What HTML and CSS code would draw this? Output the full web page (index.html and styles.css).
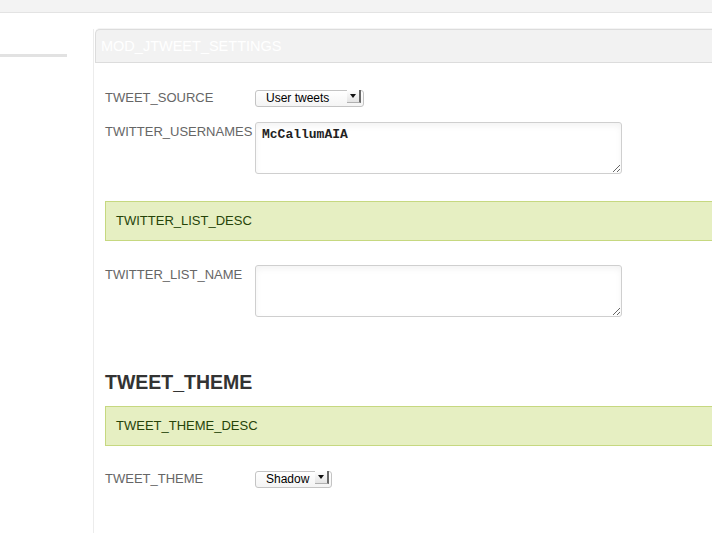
FILE: index.html
```html
<!DOCTYPE html>
<html lang="en">
<head>
    <meta charset="UTF-8">
    <meta name="viewport" content="width=device-width, initial-scale=1.0">
    <title>Module Settings</title>
    <link rel="stylesheet" href="styles.css">
</head>
<body>

    <!-- Top Bar -->
    <div class="topbar"></div>

    <div class="layout">
        <!-- Sidebar -->
        <div class="sidebar">
            <div class="sidebar-line"></div>
        </div>

        <!-- Settings Panel -->
        <div class="panel">
            <div class="panel-title">MOD_JTWEET_SETTINGS</div>

            <div class="panel-body">
                <div class="row row-source">
                    <label class="row-label" for="tweetSource">TWEET_SOURCE</label>
                    <span class="select-wrap">
                        <select id="tweetSource" class="select">
                            <option>User tweets</option>
                        </select>
                        <span class="select-arrow"></span>
                    </span>
                </div>

                <div class="row row-usernames">
                    <label class="row-label row-label-top" for="usernames">TWITTER_USERNAMES</label>
                    <textarea id="usernames" class="textarea">McCallumAIA</textarea>
                </div>

                <div class="notice notice-list">TWITTER_LIST_DESC</div>

                <div class="row row-listname">
                    <label class="row-label row-label-top" for="listName">TWITTER_LIST_NAME</label>
                    <textarea id="listName" class="textarea"></textarea>
                </div>

                <h3 class="section-title">TWEET_THEME</h3>

                <div class="notice notice-theme">TWEET_THEME_DESC</div>

                <div class="row row-theme">
                    <label class="row-label" for="tweetTheme">TWEET_THEME</label>
                    <span class="select-wrap select-small">
                        <select id="tweetTheme" class="select">
                            <option>Shadow</option>
                        </select>
                        <span class="select-arrow"></span>
                    </span>
                </div>
            </div>
        </div>
    </div>

</body>
</html>
```

FILE: styles.css
```css
/* Page layout */
body, html {
    margin: 0;
    height: 100%;
    overflow: hidden;
    background-color: #fff;
    font-family: "Liberation Sans", Arial, Helvetica, sans-serif;
}

/* Top bar */
.topbar {
    height: 12px;
    background-color: #f3f3f3;
    border-bottom: 1px solid #e3e3e3;
}

.layout {
    display: flex;
    padding-top: 16px;
    height: 100%;
    box-sizing: border-box;
}

/* Sidebar */
.sidebar {
    width: 67px;
    flex: none;
    margin-right: 26px;
}

.sidebar-line {
    margin-top: 25px;
    height: 3px;
    background-color: #e2e2e2;
}

/* Settings panel */
.panel {
    flex: none;
    width: 720px;
    border-left: 1px solid #ececec;
}

.panel-title {
    height: 32px;
    line-height: 32px;
    padding-left: 5px;
    margin-left: 1px;
    background-color: #f2f2f2;
    border: 1px solid #dcdcdc;
    border-right: none;
    border-radius: 5px 0 0 0;
    box-shadow: 0 -1px 0 #f4f4f4;
    color: #fff;
    font-size: 14.5px;
}

.panel-body {
    padding: 24px 0 0 11px;
}

/* Form rows */
.row {
    display: flex;
    align-items: center;
}

.row-label {
    width: 150px;
    flex: none;
    padding-top: 3px;
    font-size: 13px;
    color: #666;
}

.row-label-top {
    align-self: flex-start;
    padding-top: 2px;
}

.row-usernames {
    margin-top: 17px;
}

.row-listname {
    margin-top: 24px;
}

.row-theme {
    margin-top: 22px;
}

/* Select boxes */
.select-wrap {
    position: relative;
    display: inline-block;
    width: 109px;
    height: 17px;
}

.select-small {
    width: 77px;
}

.select {
    -webkit-appearance: none;
    appearance: none;
    width: 100%;
    height: 17px;
    margin: 0;
    padding: 0 0 0 10px;
    border: 1px solid #c4c4c4;
    border-radius: 3px;
    background: linear-gradient(#fff, #f4f4f4);
    font-family: "Liberation Sans", Arial, sans-serif;
    font-size: 12px;
    line-height: 15px;
    color: #000;
    box-sizing: border-box;
}

.select-arrow {
    position: absolute;
    right: 3px;
    top: 2px;
    width: 12px;
    height: 12px;
    background: linear-gradient(#fff, #e4e4e4);
    border-right: 2px solid #6a6a6a;
    border-bottom: 1px solid #b0b0b0;
    pointer-events: none;
}

.select-arrow::after {
    content: "";
    position: absolute;
    left: 3px;
    top: 4px;
    border-left: 3px solid transparent;
    border-right: 3px solid transparent;
    border-top: 4px solid #111;
}

/* Text areas */
.textarea {
    width: 367px;
    height: 52px;
    margin: 0;
    padding: 4px 6px;
    border: 1px solid #cfcfcf;
    border-radius: 3px;
    box-shadow: inset 0 3px 6px rgba(0, 0, 0, 0.05);
    box-sizing: border-box;
    font-family: "Liberation Mono", "Courier New", monospace;
    font-weight: bold;
    font-size: 13px;
    color: #222;
}

/* Notice boxes */
.notice {
    height: 38px;
    line-height: 38px;
    padding-left: 10px;
    background-color: #e6efc2;
    border: 1px solid #c6d880;
    border-right: none;
    color: #264409;
    font-size: 13px;
}

.notice-list {
    margin-top: 27px;
}

/* Section heading */
.section-title {
    margin: 53px 0 12px 0;
    font-size: 19.5px;
    line-height: 24px;
    font-weight: bold;
    color: #333;
}
```
